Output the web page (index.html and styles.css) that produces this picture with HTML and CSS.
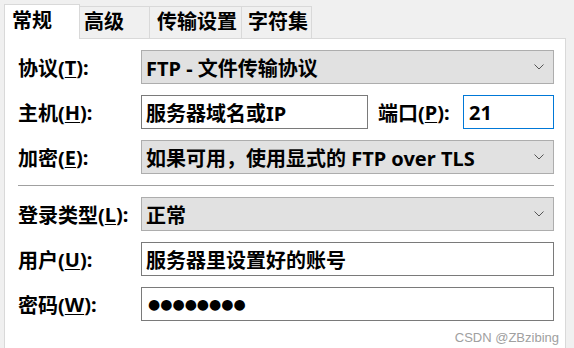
FILE: index.html
```html
<!DOCTYPE html>
<html lang="zh-CN">
<head>
<meta charset="utf-8">
<title>站点设置</title>
<link rel="stylesheet" href="styles.css">
</head>
<body>
<div class="window">
  <div class="tabs">
    <div class="tab tab-active w1">常规</div>
    <div class="tab w2">高级</div>
    <div class="tab w3">传输设置</div>
    <div class="tab w4">字符集</div>
  </div>
  <div class="panel">
    <div class="form">
      <div class="label">协议(<u>T</u>):</div>
      <div class="combo"><span class="value">FTP - 文件传输协议</span><span class="chev"><svg width="10" height="6" viewBox="0 0 10 6"><path d="M0.5 0.5 L5 5 L9.5 0.5" fill="none" stroke="#555" stroke-width="1"/></svg></span></div>

      <div class="label">主机(<u>H</u>):</div>
      <div class="hostrow">
        <div class="input host"><span class="value">服务器域名或IP</span></div>
        <div class="label portlabel">端口(<u>P</u>):</div>
        <div class="input port focused"><span class="value">21</span></div>
      </div>

      <div class="label">加密(<u>E</u>):</div>
      <div class="combo"><span class="value">如果可用，使用显式的 FTP over TLS</span><span class="chev"><svg width="10" height="6" viewBox="0 0 10 6"><path d="M0.5 0.5 L5 5 L9.5 0.5" fill="none" stroke="#555" stroke-width="1"/></svg></span></div>

      <div class="sep"></div>

      <div class="label">登录类型(<u>L</u>):</div>
      <div class="combo"><span class="value">正常</span><span class="chev"><svg width="10" height="6" viewBox="0 0 10 6"><path d="M0.5 0.5 L5 5 L9.5 0.5" fill="none" stroke="#555" stroke-width="1"/></svg></span></div>

      <div class="label">用户(<u>U</u>):</div>
      <div class="input"><span class="value">服务器里设置好的账号</span></div>

      <div class="label">密码(<u>W</u>):</div>
      <div class="input"><span class="value dots">●●●●●●●●</span></div>
    </div>
    <div class="watermark">CSDN @ZBzibing</div>
  </div>
</div>
</body>
</html>
```
FILE: styles.css
```css
* { box-sizing: border-box; }
html, body { margin: 0; padding: 0; }
body {
  background: #f0f0f0;
  font-family: "Noto Sans", "Noto Sans CJK SC", sans-serif;
  font-weight: 700;
  font-size: 20px;
  color: #000;
}
.window {
  width: 574px;
  height: 348px;
  overflow: hidden;
  background: #f0f0f0;
}
.tabs {
  display: flex;
  align-items: flex-end;
  padding: 4px 0 0 4px;
  height: 39px;
  position: relative;
  z-index: 2;
}
.tab {
  height: 32px;
  border: 1px solid #d9d9d9;
  border-bottom: none;
  background: #f0f0f0;
  margin-left: -1px;
  padding-left: 4px;
  line-height: 30px;
  white-space: nowrap;
  margin-bottom: 1px;
}
.tab-active {
  height: 35px;
  margin-left: 0;
  margin-bottom: 0;
  background: #fff;
  padding-left: 7px;
  line-height: 31px;
}
.w1 { width: 76px; }
.w2 { width: 71px; }
.w3 { width: 93px; padding-left: 7px; }
.w4 { width: 71px; padding-left: 6px; }
.panel {
  margin: -1px 0 0 4px;
  width: 562px;
  height: 311px;
  background: #fff;
  border: 1px solid #d9d9d9;
  border-bottom: none;
  padding: 11px 11px 0 13px;
  position: relative;
}
.form {
  display: grid;
  grid-template-columns: 123px 413px;
  row-gap: 11px;
}
.label {
  display: flex;
  align-items: center;
  height: 34px;
  white-space: nowrap;
}
.label u { text-decoration-thickness: 1px; text-underline-offset: 2px; }
.combo, .input {
  height: 34px;
  display: flex;
  align-items: center;
  padding-left: 4px;
  white-space: nowrap;
}
.combo {
  background: #e1e1e1;
  border: 1px solid #adadad;
  justify-content: space-between;
  padding-right: 9px;
}
.input {
  background: #fff;
  border: 1px solid #7a7a7a;
}
.input.focused { border-color: #0078d7; }
.chev { display: flex; }
.hostrow {
  display: flex;
  align-items: center;
}
.host { width: 227px; }
.portlabel { margin-left: 10px; width: 85px; }
.port { width: 91px; padding-left: 5px; }
.sep {
  grid-column: 1 / span 2;
  height: 1px;
  background: #a0a0a0;
}
.dots {
  font-family: "DejaVu Sans", sans-serif;
  font-size: 14px;
  padding-left: 2px;
}
.watermark {
  position: absolute;
  right: 6px;
  bottom: 4px;
  font-family: "Liberation Sans", sans-serif;
  font-weight: 400;
  font-size: 13px;
  color: #a0a0a0;
}
```
